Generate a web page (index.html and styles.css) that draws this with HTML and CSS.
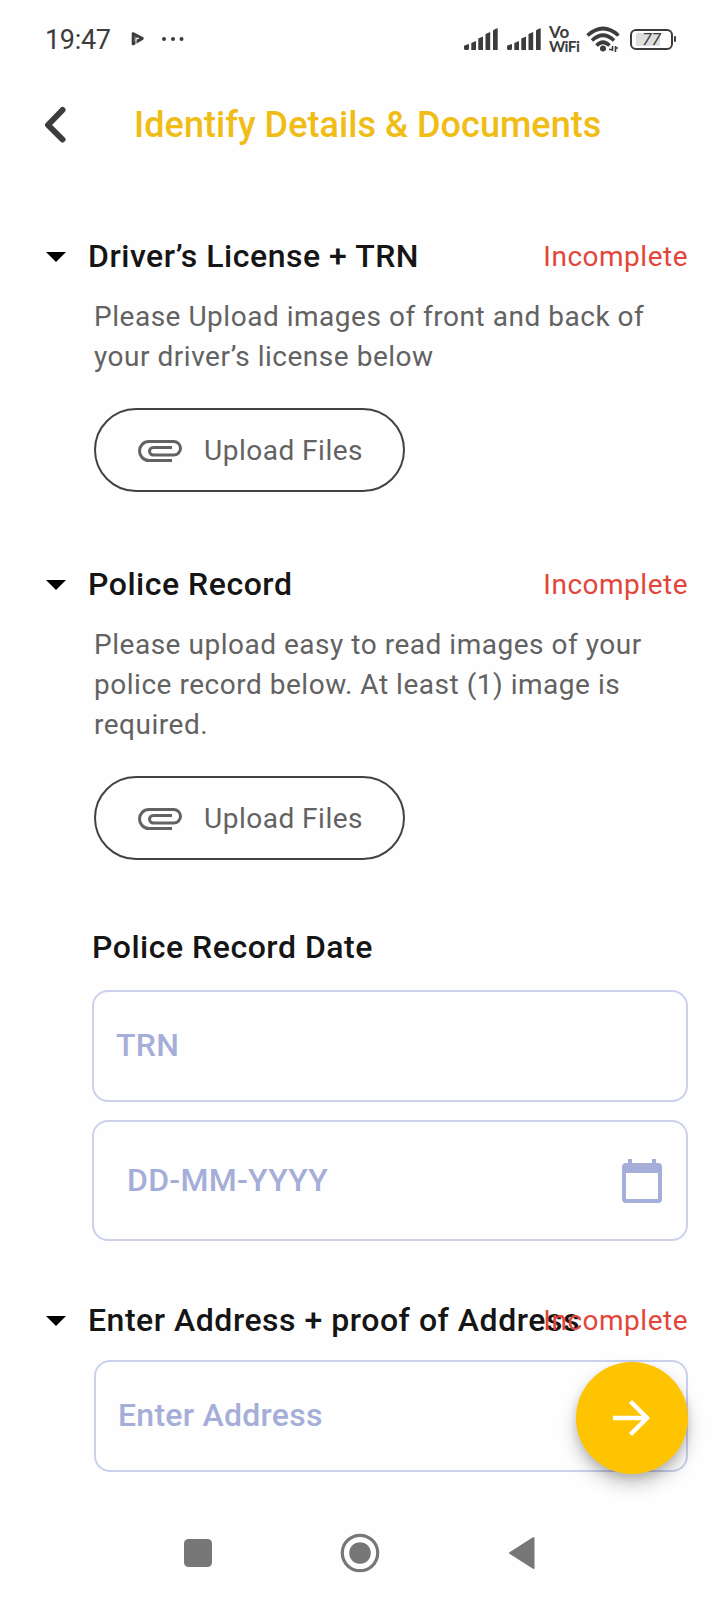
FILE: index.html
```html
<!DOCTYPE html>
<html lang="en">
<head>
<meta charset="utf-8">
<title>Identify Details &amp; Documents</title>
<link rel="stylesheet" href="styles.css">
</head>
<body>
<div class="screen">
  <div class="status">
    <span class="clock">19:47</span>
    <svg class="play" width="14" height="16" viewBox="0 0 14 16"><path d="M2 2.500 11.500 7.500 2 13z" fill="#777" stroke="#3c3c3c" stroke-width="2.600" stroke-linejoin="round"/><path d="M5 13V7.500l3-.3" stroke="#fefefe" stroke-width="1" fill="none"/></svg>
    <svg class="dots" width="22" height="6" viewBox="0 0 22 6" fill="#3c3c3c"><circle cx="2" cy="3" r="2"/><circle cx="11" cy="3" r="2"/><circle cx="19.500" cy="3" r="2"/></svg>
    <svg class="signal" width="34" height="22" viewBox="0 0 34 22" fill="#3c3c3c"><path id="bars" d="M0 20.500v-2q0-1 1-1.300L5 16v4.500q0 1.500-1.500 1.500h-2Q0 22 0 20.500zM7.300 22v-7l4.700-2v9zM14.300 22V10.500l4.700-2V22zM21.500 22V6l4.700-2v18zM29 22V2.500Q31 .5 33.700.3V22z"/></svg>
    <svg class="signal second" width="34" height="22" viewBox="0 0 34 22" fill="#3c3c3c"><use href="#bars"/></svg>
    <span class="vowifi"><span class="vo">Vo</span><span>WiFi</span></span>
    <svg class="wifi" width="34" height="26" viewBox="0 0 34 26" fill="none" stroke="#3c3c3c" stroke-width="3.600"><path d="M1.500 9.500Q17-4.500 32.500 9.500M6 14.500Q17 4 28 14.500M10.500 19.500Q17 13 23.500 19.500"/><circle cx="17" cy="22.500" r="3" fill="#3c3c3c" stroke="none"/><path d="M23 23.500h4M26.500 20v5M29.500 20v6M29 22h3" stroke-width="1.600"/></svg>
    <span class="battery"><span class="level">77</span></span><span class="cap"></span>
  </div>

  <header class="header">
    <svg width="22" height="38" viewBox="0 0 22 38" fill="none" stroke="#3c3c3c" stroke-width="6" stroke-linecap="round" stroke-linejoin="round"><path d="M18.500 4 4 19l14.500 14.500"/></svg>
    <h1>Identify Details &amp; Documents</h1>
  </header>

  <main>
    <section>
      <div class="row"><i class="caret"></i><h2>Driver’s License + TRN</h2><span class="state">Incomplete</span></div>
      <p>Please Upload images of front and back of<br>your driver’s license below</p>
      <button class="upload"><svg width="44" height="22" viewBox="0 0 44 22" fill="none" stroke="#626262" stroke-width="3"><path id="clip" d="M34 20.500H11C5.500 20.500 1.500 16 1.500 11S5.500 1.500 11 1.500H35.500C39.500 1.500 42.500 4.500 42.500 8.300S39.500 15 35.500 15H15.500C13 15 11.500 13.300 11.500 11.300S13 7.500 15.500 7.500H34"/></svg><span>Upload Files</span></button>
    </section>

    <section class="police">
      <div class="row"><i class="caret"></i><h2>Police Record</h2><span class="state">Incomplete</span></div>
      <p>Please upload easy to read images of your<br>police record below. At least (1) image is<br>required.</p>
      <button class="upload"><svg width="44" height="22" viewBox="0 0 44 22" fill="none" stroke="#626262" stroke-width="3"><use href="#clip"/></svg><span>Upload Files</span></button>
      <h2 class="date-title">Police Record Date</h2>
      <div class="field">TRN</div>
      <div class="field date"><span>DD-MM-YYYY</span>
        <svg width="40" height="44" viewBox="0 0 40 44" fill="#a5aed8"><path fill-rule="evenodd" d="M6 0h4v4h20V0h4v4h2q4 0 4 4v32q0 4-4 4H4q-4 0-4-4V8q0-4 4-4h2zM4 14v26h32V14z"/></svg>
      </div>
    </section>

    <section class="address">
      <div class="row"><i class="caret"></i><h2>Enter Address + proof of Address</h2><span class="state">Incomplete</span></div>
      <div class="field">Enter Address</div>
    </section>
  </main>

  <button class="fab" aria-label="Next"><svg width="38" height="38" viewBox="0 0 38 38" fill="none" stroke="#fff" stroke-width="4.400"><path d="M0 19h34M17.500 2.500 34 19 17.500 35.500"/></svg></button>

  <nav class="nav">
    <svg width="28" height="28" viewBox="0 0 28 28"><rect width="28" height="28" rx="4.500" fill="#777"/></svg>
    <svg width="40" height="40" viewBox="0 0 40 40"><circle cx="20" cy="20" r="17.700" fill="none" stroke="#777" stroke-width="3.200"/><circle cx="20" cy="20" r="10.800" fill="#777"/></svg>
    <svg width="28" height="34" viewBox="0 0 28 34"><path d="M2 17 25.500 2v30z" fill="#777" stroke="#777" stroke-width="2" stroke-linejoin="round"/></svg>
  </nav>
</div>
</body>
</html>
```
FILE: styles.css
```css
* { box-sizing: border-box; }
body { margin: 0; background: #fefefe; font-family: Roboto, "Liberation Sans", sans-serif; }
h1, h2, p { margin: 0; font-weight: 500; }
svg { display: block; flex: none; }
button { font: inherit; padding: 0; }

.screen { position: relative; width: 720px; height: 1600px; overflow: hidden; display: flex; flex-direction: column; }

.status { height: 78px; padding-left: 45px; display: flex; align-items: center; color: #3c3c3c; }
.clock { width: 68px; padding-top: 2px; font-size: 27px; letter-spacing: -.3px; white-space: nowrap; }
.play { margin-left: 18px; }
.dots { margin-left: 17px; }
.signal { margin-left: 280px; }
.signal.second { margin-left: 9px; }
.vowifi { margin-left: 8px; width: 31px; display: flex; flex-direction: column; font-family: Lato, sans-serif; font-weight: 700; font-size: 15.500px; line-height: 15px; letter-spacing: -.6px; white-space: nowrap; }
.vo { font-size: 17px; letter-spacing: 0; }
.wifi { margin-left: 6px; }
.battery { margin-left: 10px; width: 43px; height: 21px; border: 2px solid #3c3c3c; border-radius: 6px; padding: 2px 4px; }
.level { display: block; height: 13px; background: linear-gradient(90deg, #dedede 78%, transparent 78%); font: italic 17px/13px Roboto, sans-serif; text-align: center; }
.cap { width: 2px; height: 6px; margin-left: 1px; background: #3c3c3c; border-radius: 1px; }

.header { height: 94px; padding-left: 44px; display: flex; align-items: center; }
.header h1 { margin-left: 68px; font-size: 36px; line-height: 42px; letter-spacing: .04px; color: #efbd16; white-space: nowrap; }

main { padding: 65px 32px 0 46px; }
.row { position: relative; display: flex; align-items: center; height: 40px; }
.caret { width: 20px; height: 10px; background: #000; clip-path: polygon(0 0, 100% 0, 50% 100%); }
h2 { height: 40px; font-size: 32px; line-height: 38px; letter-spacing: .52px; color: #151515; white-space: nowrap; }
.row h2 { margin-left: 22px; }
.state { position: absolute; right: 0; top: 0; font-size: 28px; line-height: 40px; letter-spacing: .5px; color: #e3453b; }
p { margin: 20px 0 31px 48px; font-size: 28px; line-height: 40px; font-weight: 400; letter-spacing: .52px; color: #626262; white-space: nowrap; }
.upload { margin-left: 48px; width: 311px; height: 84px; border: 2px solid #424242; border-radius: 42px; background: none; display: flex; align-items: center; padding: 1px 0 0 42px; gap: 22px; font-size: 28px; letter-spacing: .5px; color: #626262; white-space: nowrap; }
.police { margin-top: 73px; }
.date-title { margin: 68px 0 22px 46px; }
.field { margin-left: 46px; height: 112px; border: 2px solid #cbd0ec; border-radius: 16px; padding: 0 24px 2px 22px; display: flex; align-items: center; font-size: 32px; font-weight: 500; letter-spacing: .26px; color: #a5aed8; }
.field.date { margin-top: 18px; height: 121px; padding: 0 24px 0 33px; justify-content: space-between; }
.field.date span { padding-bottom: 2px; }
.address { margin-top: 60px; }
.address .field { margin: 19px 0 0 48px; }

/* Floats above the form */
.fab { position: absolute; right: 32px; top: 1362px; width: 112px; height: 112px; border: 0; border-radius: 50%; background: #ffc401; box-shadow: 0 10px 18px rgba(0,0,0,.22), 0 4px 8px rgba(0,0,0,.12); display: flex; align-items: center; justify-content: center; }

.nav { margin-top: auto; height: 94px; padding-left: 184px; display: flex; align-items: center; }
.nav svg:nth-child(2) { margin-left: 128px; }
.nav svg:nth-child(3) { margin-left: 128px; }
```
